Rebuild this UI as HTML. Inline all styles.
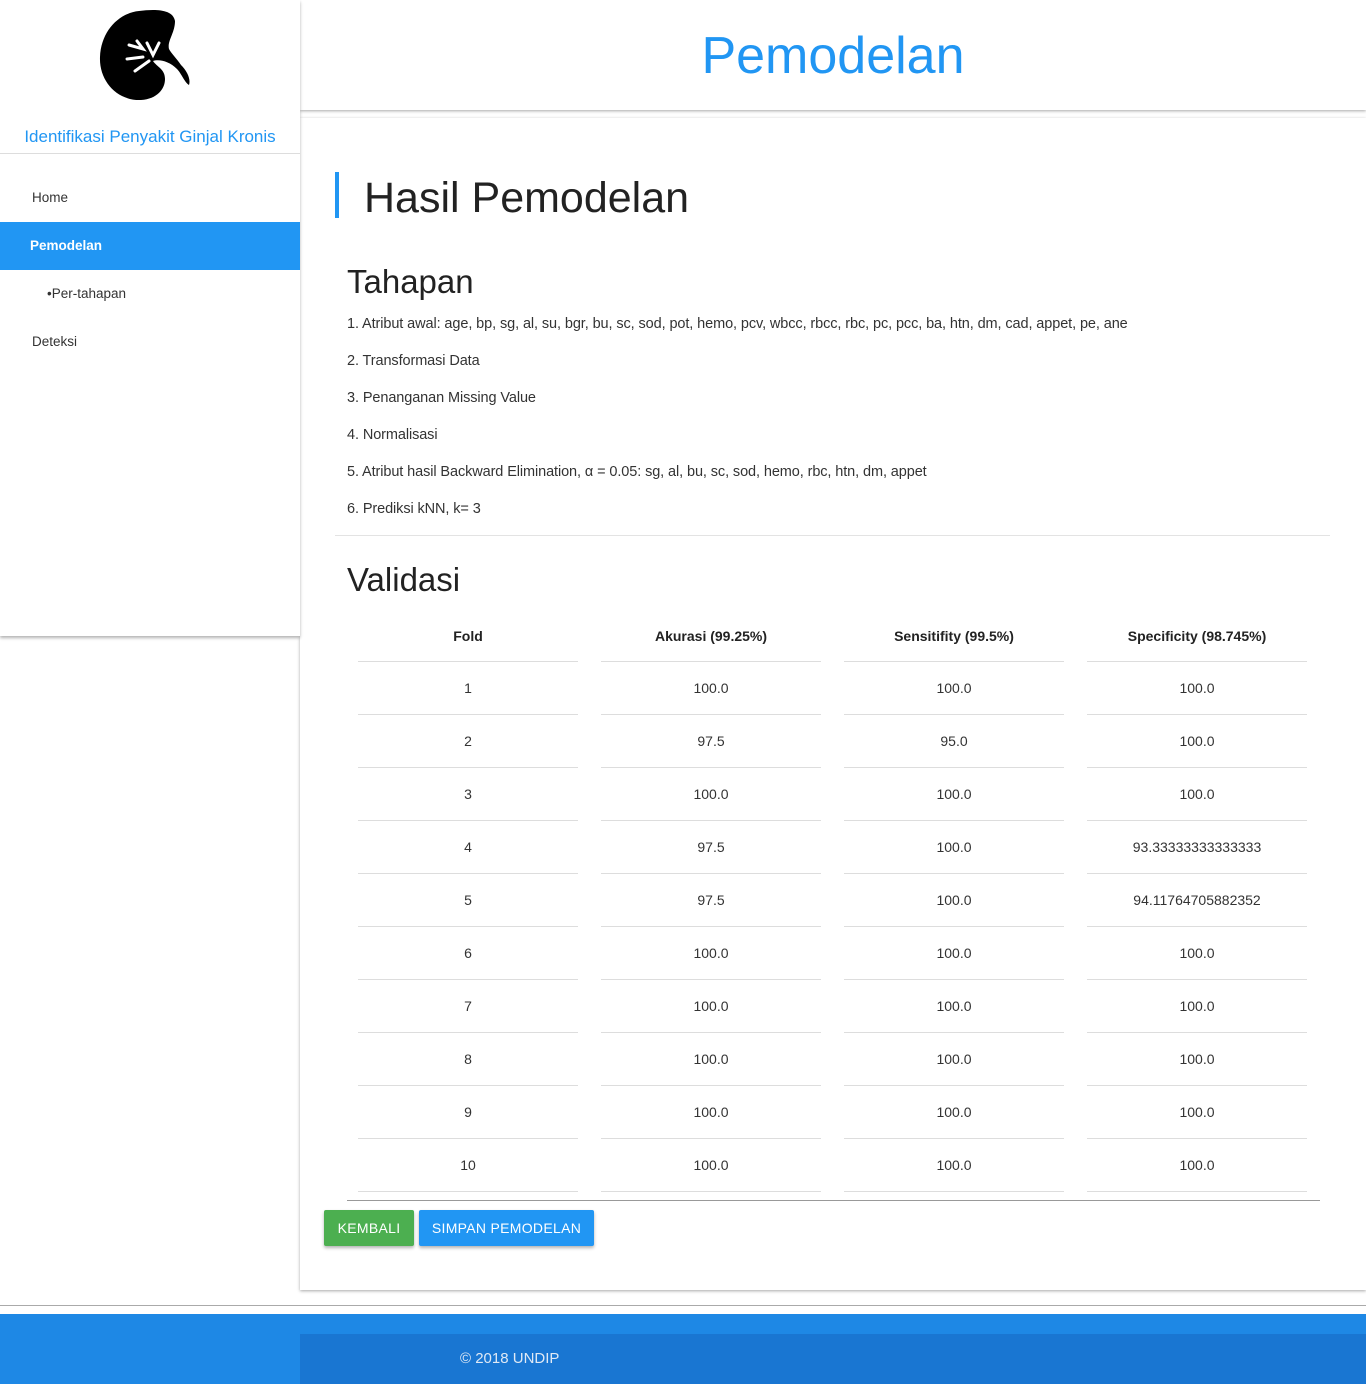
<!DOCTYPE html>
<html><head><meta charset="utf-8"><style>
*{margin:0;padding:0;box-sizing:border-box}
body{width:1366px;height:1384px;position:relative;background:#fff;font-family:"Liberation Sans",sans-serif;color:#222;overflow:hidden}
.side{position:absolute;left:0;top:0;width:300px;height:636px;background:#fff;box-shadow:0 2px 3px rgba(0,0,0,.3);z-index:2}
.side .t{position:absolute;top:127px;width:300px;text-align:center;color:#2196f3;font-size:17px}
.side .hr{position:absolute;top:153px;left:0;width:300px;border-top:1px solid #ddd}
.nav{position:absolute;left:0;width:300px;height:48px;line-height:48px;font-size:13.5px;color:#333}
.hdr{position:absolute;left:300px;top:0;width:1066px;height:110px;background:#fff;box-shadow:0 1px 3px rgba(0,0,0,.35);text-align:center}
.hdr h1{font-weight:normal;color:#2196f3;font-size:52px;line-height:112px}
.card{position:absolute;left:300px;top:118px;width:1066px;height:1172px;background:#fff;box-shadow:0 1px 3px rgba(0,0,0,.35)}
.abs{position:absolute}
p.s{position:absolute;left:347px;font-size:14.5px;color:#333;letter-spacing:-.1px}
table{position:absolute;left:335px;top:610px;border-spacing:23px 0;border-collapse:separate}
td,th{width:220px;min-width:220px;max-width:220px;height:53px;text-align:center;font-size:14px;border-bottom:1px solid #ddd;color:#333;padding:0}
th{height:52px;font-weight:bold;color:#222}
.btn{position:absolute;top:1210px;height:36px;line-height:36px;color:#fff;font-size:14px;text-align:center;border-radius:2px;box-shadow:0 2px 3px rgba(0,0,0,.3);letter-spacing:.3px}
</style></head><body>
<div class="side">
<svg class="abs" style="left:99px;top:9px" width="92" height="92" viewBox="0 0 92 92">
<path d="M40 2 C20 4 2 22 1 48 C0 72 18 92 42 91 C58 90 66 80 66 70 C66 60 58 58 54 52 C60 50 70 52 78 60 C82 64 86 74 90 76 C92 70 88 62 82 56 C78 50 72 44 70 40 C68 32 76 24 76 12 C74 0 56 0 40 2Z" fill="#000"/>
<path d="M30 36 L44 40 L38 32 M28 50 L44 48 M36 62 L50 52 M48 34 L54 46 L60 34" stroke="#fff" stroke-width="3" fill="none" stroke-linecap="round"/>
</svg>
<div class="t">Identifikasi Penyakit Ginjal Kronis</div>
<div class="hr"></div>
<div class="nav" style="top:174px;padding-left:32px">Home</div>
<div class="nav" style="top:222px;padding-left:30px;background:#2196f3;color:#fff;font-weight:bold">Pemodelan</div>
<div class="nav" style="top:270px;padding-left:47px">•Per-tahapan</div>
<div class="nav" style="top:318px;padding-left:32px">Deteksi</div>
</div>
<div class="hdr"><h1>Pemodelan</h1></div>
<div class="card"></div>
<div class="abs" style="left:335px;top:172px;width:4px;height:46px;background:#2196f3"></div>
<div class="abs" style="left:364px;top:170px;font-size:43px;line-height:56px;color:#222">Hasil Pemodelan</div>
<div class="abs" style="left:347px;top:260px;font-size:33px;line-height:44px">Tahapan</div>
<p class="s" style="top:316px">1. Atribut awal: age, bp, sg, al, su, bgr, bu, sc, sod, pot, hemo, pcv, wbcc, rbcc, rbc, pc, pcc, ba, htn, dm, cad, appet, pe, ane</p>
<p class="s" style="top:353px">2. Transformasi Data</p>
<p class="s" style="top:390px">3. Penanganan Missing Value</p>
<p class="s" style="top:427px">4. Normalisasi</p>
<p class="s" style="top:464px">5. Atribut hasil Backward Elimination, α = 0.05: sg, al, bu, sc, sod, hemo, rbc, htn, dm, appet</p>
<p class="s" style="top:501px">6. Prediksi kNN, k= 3</p>
<div class="abs" style="left:335px;top:535px;width:995px;border-top:1px solid #e3e3e3"></div>
<div class="abs" style="left:347px;top:558px;font-size:33px;line-height:44px">Validasi</div>
<table>
<tr><th>Fold</th><th>Akurasi (99.25%)</th><th>Sensitifity (99.5%)</th><th>Specificity (98.745%)</th></tr>
<tr><td>1</td><td>100.0</td><td>100.0</td><td>100.0</td></tr>
<tr><td>2</td><td>97.5</td><td>95.0</td><td>100.0</td></tr>
<tr><td>3</td><td>100.0</td><td>100.0</td><td>100.0</td></tr>
<tr><td>4</td><td>97.5</td><td>100.0</td><td>93.33333333333333</td></tr>
<tr><td>5</td><td>97.5</td><td>100.0</td><td>94.11764705882352</td></tr>
<tr><td>6</td><td>100.0</td><td>100.0</td><td>100.0</td></tr>
<tr><td>7</td><td>100.0</td><td>100.0</td><td>100.0</td></tr>
<tr><td>8</td><td>100.0</td><td>100.0</td><td>100.0</td></tr>
<tr><td>9</td><td>100.0</td><td>100.0</td><td>100.0</td></tr>
<tr><td>10</td><td>100.0</td><td>100.0</td><td>100.0</td></tr>
</table>
<div class="abs" style="left:347px;top:1200px;width:973px;border-top:1px solid #999"></div>
<div class="btn" style="left:324px;width:90px;background:#4caf50">KEMBALI</div>
<div class="btn" style="left:419px;width:175px;background:#2196f3">SIMPAN PEMODELAN</div>
<div class="abs" style="left:0;top:1305px;width:1366px;border-top:1px solid #aaa"></div>
<div class="abs" style="left:0;top:1314px;width:1366px;height:70px;background:#1e88e5"></div>
<div class="abs" style="left:300px;top:1334px;width:1066px;height:50px;background:#1976d2"></div>
<div class="abs" style="left:460px;top:1350px;color:#dfe9f5;font-size:15px">© 2018 UNDIP</div>
</body></html>
